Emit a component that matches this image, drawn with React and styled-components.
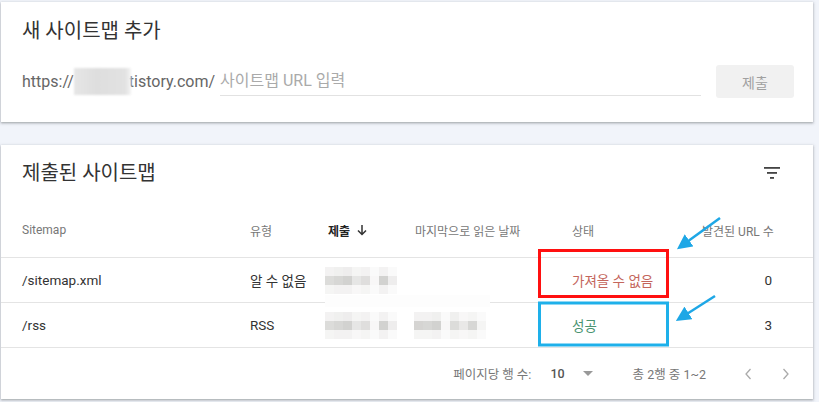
import styled, { createGlobalStyle } from 'styled-components';

const GlobalStyle = createGlobalStyle`
  html, body {
    margin: 0;
    padding: 0;
    background: #f1f4fa;
  }
  body {
    font-family: Roboto, "Noto Sans CJK KR", sans-serif;
    color: #333;
  }
`;

// blurred date cells: rows of pixel lightness values
const blurA = [
  [95, 94, 93, 96, 95, 98, 95, 98],
  [86, 84, 82, 90, 87, 97, 82, 93],
  [96, 95, 95, 97, 96, 98, 95, 98],
];
const blurB = [
  [95, 95, 94, 98, 94, 97, 96, 98],
  [83, 84, 82, 97, 86, 91, 84, 96],
  [96, 96, 95, 98, 96, 97, 96, 98],
];

const rows = [
  {
    path: '/sitemap.xml',
    type: '알 수 없음',
    status: '가져올 수 없음',
    ok: false,
    count: 0,
    blur: [blurA],
    cover: true,
  },
  {
    path: '/rss',
    type: 'RSS',
    status: '성공',
    ok: true,
    count: 3,
    blur: [blurA, blurB],
  },
];

const App = () => (
  <>
    <GlobalStyle />
    <Page>
      <Card>
        <Title>새 사이트맵 추가</Title>
        <UrlRow>
          <Prefix>
            https://<Masked />tistory.com/
          </Prefix>
          <UrlInput placeholder="사이트맵 URL 입력" />
          <SubmitButton disabled>제출</SubmitButton>
        </UrlRow>
      </Card>

      <Card>
        <TitleRow>
          <Title>제출된 사이트맵</Title>
          <FilterIcon viewBox="0 0 16 12">
            <rect x="0" y="0" width="16" height="1.8" />
            <rect x="3" y="5" width="10" height="1.8" />
            <rect x="6" y="10" width="4" height="1.8" />
          </FilterIcon>
        </TitleRow>

        <HeaderRow>
          <HeadCell>Sitemap</HeadCell>
          <HeadCell>유형</HeadCell>
          <HeadCell $active>
            제출 <SortArrow viewBox="0 0 12 12">
              <path d="M6 1v9M2 6.5l4 4 4-4" />
            </SortArrow>
          </HeadCell>
          <HeadCell>마지막으로 읽은 날짜</HeadCell>
          <HeadCell>상태</HeadCell>
          <HeadCell $right>발견된 URL 수</HeadCell>
        </HeaderRow>

        {rows.map((r) => (
          <BodyRow key={r.path}>
            <Cell>{r.path}</Cell>
            <Cell>{r.type}</Cell>
            <DateCell>
              {r.blur.map((grid, i) => (
                <Mosaic key={i} $cover={r.cover && i === 0}>
                  {grid.flatMap((line, y) =>
                    line.map((v, x) => (
                      <Pixel key={`${y}-${x}`} style={{ background: `hsl(40, 3%, ${v}%)` }} />
                    ))
                  )}
                </Mosaic>
              ))}
            </DateCell>
            <Status $ok={r.ok}>{r.status}</Status>
            <Cell $right>{r.count}</Cell>
          </BodyRow>
        ))}

        <Footer>
          <FooterText>페이지당 행 수:</FooterText>
          <PerPage>
            10
            <Caret viewBox="0 0 10 5">
              <path d="M0 0h10L5 5z" />
            </Caret>
          </PerPage>
          <FooterText>총 2행 중 1~2</FooterText>
          <Pager>
            <Chevron viewBox="0 0 8 12">
              <path d="M6.5 1L2 6l4.5 5" />
            </Chevron>
            <Chevron viewBox="0 0 8 12">
              <path d="M1.5 1L6 6l-4.5 5" />
            </Chevron>
          </Pager>
        </Footer>
      </Card>

      <Annotations viewBox="0 0 819 402">
        <defs>
          <marker id="head" markerWidth="6" markerHeight="6" refX="4.5" refY="3" orient="auto">
            <path d="M0 0L6 3L0 6z" fill="#1ea7e6" />
          </marker>
        </defs>
        <rect x="539.5" y="250.5" width="128" height="46" fill="none" stroke="#ff1010" strokeWidth="3" />
        <rect x="539.5" y="303" width="128" height="42" fill="none" stroke="#1eb0ea" strokeWidth="3" />
        <line x1="720" y1="218" x2="680" y2="247" stroke="#1ea7e6" strokeWidth="2.5" markerEnd="url(#head)" />
        <line x1="715" y1="296" x2="679" y2="319" stroke="#1ea7e6" strokeWidth="2.5" markerEnd="url(#head)" />
      </Annotations>
    </Page>
  </>
);

const Page = styled.div`
  position: relative;
  width: 819px;
  height: 402px;
  box-sizing: border-box;
  padding: 2px 6px 0 1px;
  display: flex;
  flex-direction: column;
  gap: 23px;
  overflow: hidden;
`;

const Card = styled.section`
  background: #fff;
  box-shadow: 0 1px 2px rgba(60, 64, 67, 0.35), 0 1px 3px 1px rgba(60, 64, 67, 0.12);
  display: flex;
  flex-direction: column;
`;

const Title = styled.h2`
  margin: 0;
  padding: 15px 21px 0;
  font-size: 20px;
  line-height: 28px;
  font-weight: 400;
  color: #333;
`;

const TitleRow = styled.div`
  display: flex;
  justify-content: space-between;
  align-items: center;
  padding-right: 33px;
  h2 {
    padding-top: 14px;
  }
`;

const FilterIcon = styled.svg`
  width: 16px;
  height: 12px;
  margin-top: 13px;
  fill: #444;
`;

const UrlRow = styled.div`
  display: flex;
  align-items: center;
  padding: 20px 19px 24px 21px;
`;

const Prefix = styled.div`
  display: flex;
  align-items: center;
  font-size: 16px;
  color: #666;
  white-space: nowrap;
`;

const Masked = styled.span`
  display: inline-block;
  width: 57px;
  height: 27px;
  margin-right: -2px;
  background: linear-gradient(90deg, #e6e6e6, #dedede 40%, #e2e2e2 90%, #f4f4f4);
  filter: blur(1px);
`;

const UrlInput = styled.input`
  flex: 1;
  margin: 0 15px 0 5px;
  border: none;
  border-bottom: 1px solid #e2e2e2;
  padding: 4px 0 5px;
  font: 16px Roboto, "Noto Sans CJK KR", sans-serif;
  color: #333;
  outline: none;
  background: transparent;
  &::placeholder {
    color: #aaa;
  }
`;

const SubmitButton = styled.button`
  width: 78px;
  height: 33px;
  border: none;
  border-radius: 3px;
  background: #f1f1f1;
  color: #a0a0a0;
  font: 14px Roboto, "Noto Sans CJK KR", sans-serif;
`;

const gridCols = `
  display: grid;
  grid-template-columns: 228px 78px 244px 130px 1fr;
  align-items: center;
  padding: 0 41px 0 21px;
  border-bottom: 1px solid #e4e4e4;
`;

const HeaderRow = styled.div`
  ${gridCols}
  grid-template-columns: 228px 78px 87px 157px 130px 1fr;
  height: 54px;
  margin-top: 16px;
`;

const HeadCell = styled.div`
  display: flex;
  align-items: center;
  justify-content: ${(p) => (p.$right ? 'flex-end' : 'flex-start')};
  gap: 6px;
  font-size: 12px;
  color: ${(p) => (p.$active ? '#222' : '#777')};
  font-weight: ${(p) => (p.$active ? 700 : 400)};
  white-space: nowrap;
`;

const SortArrow = styled.svg`
  width: 12px;
  height: 12px;
  fill: none;
  stroke: #333;
  stroke-width: 1.5;
`;

const BodyRow = styled.div`
  ${gridCols}
  height: 44px;
`;

const Cell = styled.div`
  font-size: 13.5px;
  color: #333;
  text-align: ${(p) => (p.$right ? 'right' : 'left')};
  white-space: nowrap;
`;

const DateCell = styled.div`
  display: flex;
  gap: 17px;
  margin-left: -3px;
`;

const Mosaic = styled.div`
  position: relative;
  display: grid;
  grid-template-columns: repeat(8, 9px);
  grid-auto-rows: 9px;
  filter: blur(0.7px);
  ${(p) =>
    p.$cover &&
    `
    &::after {
      content: '';
      position: absolute;
      left: 0;
      top: 28px;
      width: 165px;
      height: 12px;
      background: #fdfdfd;
    }
  `}
`;

const Pixel = styled.span`
  display: block;
`;

const Status = styled.div`
  font-size: 13.5px;
  color: ${(p) => (p.$ok ? '#4a9471' : '#c4665c')};
  white-space: nowrap;
`;

const Footer = styled.div`
  display: flex;
  align-items: center;
  justify-content: flex-end;
  height: 51px;
  padding-right: 23px;
`;

const FooterText = styled.span`
  font-size: 12.5px;
  color: #777;
  white-space: nowrap;
`;

const PerPage = styled.div`
  display: flex;
  align-items: center;
  gap: 18px;
  margin: 0 40px 0 19px;
  font-size: 12.5px;
  font-weight: 500;
  color: #555;
`;

const Caret = styled.svg`
  width: 10px;
  height: 5px;
  fill: #999;
`;

const Pager = styled.div`
  display: flex;
  gap: 30px;
  margin-left: 38px;
`;

const Chevron = styled.svg`
  width: 8px;
  height: 12px;
  fill: none;
  stroke: #aaa;
  stroke-width: 1.3;
`;

const Annotations = styled.svg`
  position: absolute;
  left: 0;
  top: 0;
  width: 819px;
  height: 402px;
  pointer-events: none;
`;

export default App;
